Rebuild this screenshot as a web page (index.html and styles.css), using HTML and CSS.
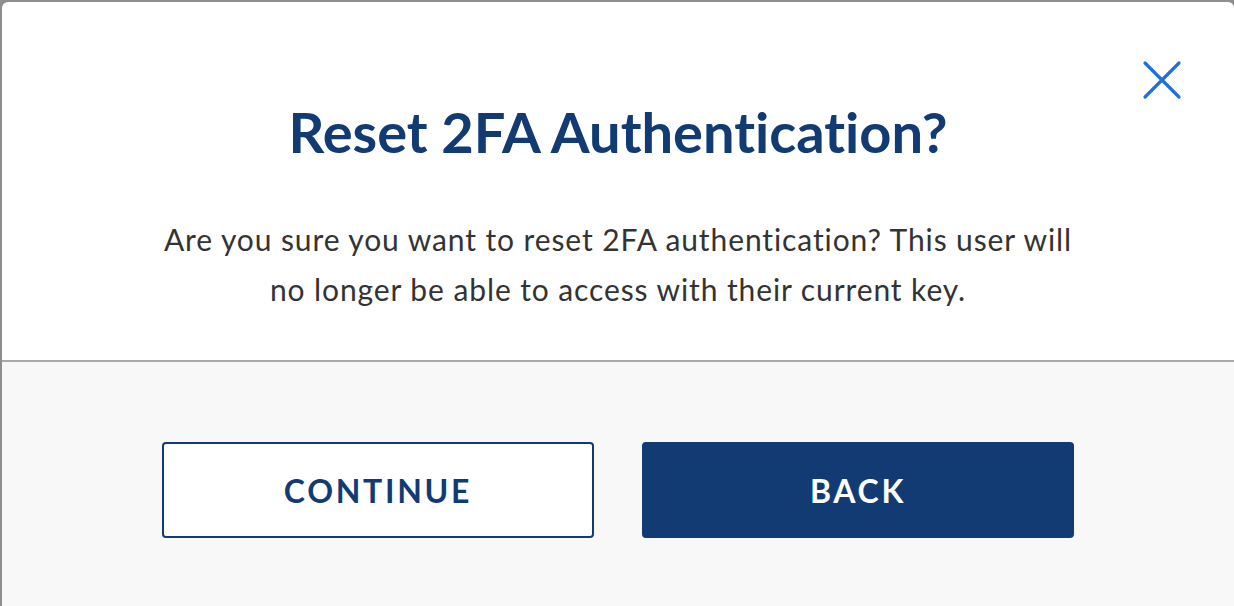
FILE: index.html
```html
<!DOCTYPE html>
<html lang="en">
<head>
<meta charset="utf-8">
<title>Reset 2FA Authentication?</title>
<link rel="stylesheet" href="styles.css">
</head>
<body>
<div class="modal" role="dialog" aria-labelledby="modal-title">
  <div class="modal-body">
    <button class="close" aria-label="Close">
      <svg width="40" height="40" viewBox="0 0 40 40" aria-hidden="true">
        <path d="M3 3 L37 37 M37 3 L3 37" stroke="#1f6fdc" stroke-width="3.2" stroke-linecap="round" fill="none"/>
      </svg>
    </button>
    <h1 id="modal-title" class="title">Reset 2FA Authentication?</h1>
    <p class="message">Are you sure you want to reset 2FA authentication? This user will no longer be able to access with their current key.</p>
  </div>
  <div class="modal-footer">
    <button class="btn btn-outline">CONTINUE</button>
    <button class="btn btn-primary">BACK</button>
  </div>
</div>
</body>
</html>
```

FILE: styles.css
```css
html, body {
  margin: 0;
  padding: 0;
  height: 100%;
}

body {
  background: #8e8e8e;
  font-family: Lato, "Open Sans", "Liberation Sans", sans-serif;
  font-variant-ligatures: none;
  overflow: hidden;
}

.modal {
  margin: 2px 0 0 2px;
  width: 1232px;
  height: 604px;
  background: #ffffff;
  border-radius: 6px 6px 0 0;
  display: flex;
  flex-direction: column;
  overflow: hidden;
}

.modal-body {
  position: relative;
  padding: 96px 0 46px;
  border-bottom: 2px solid #a9a9a9;
  display: flex;
  flex-direction: column;
  align-items: center;
}

.close {
  position: absolute;
  top: 58px;
  right: 52px;
  width: 40px;
  height: 40px;
  padding: 0;
  border: 0;
  background: transparent;
  cursor: pointer;
}

.close svg {
  display: block;
}

.title {
  margin: 0;
  font-size: 56px;
  line-height: 1.2;
  font-weight: 700;
  color: #123b73;
  text-align: center;
}

.message {
  margin: 49px 0 0;
  max-width: 930px;
  font-size: 30px;
  letter-spacing: 0.03em;
  line-height: 50px;
  color: #333333;
  text-align: center;
}

.modal-footer {
  flex: 1;
  background: #f8f8f8;
  display: flex;
  justify-content: center;
  align-items: flex-start;
  gap: 48px;
  padding-top: 80px;
}

.btn {
  width: 432px;
  height: 96px;
  border-radius: 4px;
  font-family: Lato, "Open Sans", "Liberation Sans", sans-serif;
  font-size: 32px;
  font-weight: 700;
  letter-spacing: 0.085em;
  padding: 0;
  display: flex;
  align-items: center;
  justify-content: center;
  cursor: pointer;
  box-sizing: border-box;
}

.btn-outline {
  background: #ffffff;
  color: #123b73;
  border: 2px solid #123b73;
}

.btn-primary {
  background: #123b73;
  color: #ffffff;
  border: 2px solid #123b73;
}
```
